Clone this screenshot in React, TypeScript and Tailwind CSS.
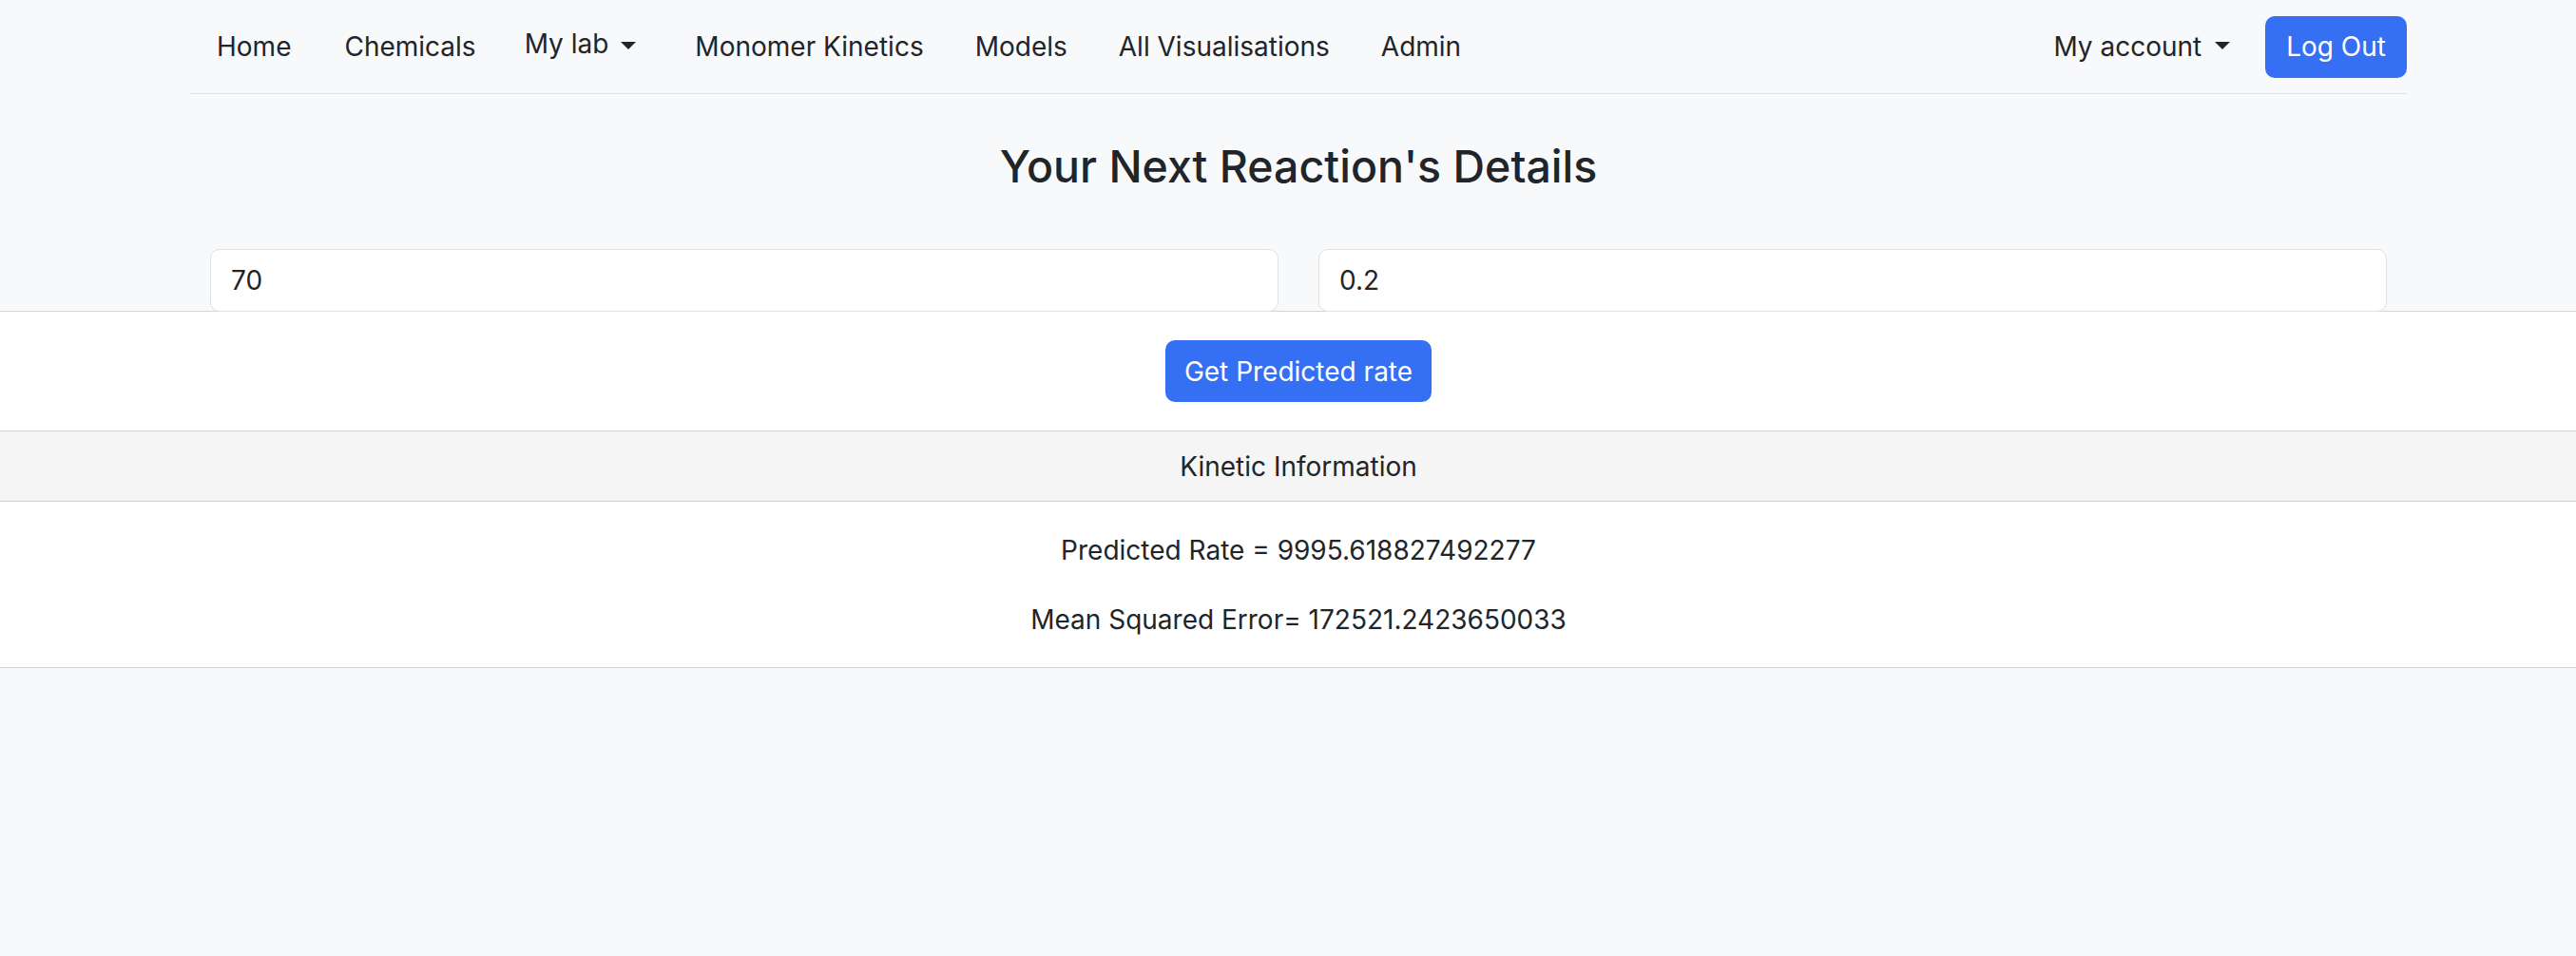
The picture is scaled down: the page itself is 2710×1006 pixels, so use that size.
import React from "react";

function Caret() {
  return (
    <span className="inline-block w-0 h-0 border-x-[8px] border-x-transparent border-t-[8px] border-t-[#212529]" />
  );
}

export default function App() {
  const links = ["Home", "Chemicals"];
  const links2 = ["Monomer Kinetics", "Models", "All Visualisations", "Admin"];
  return (
    <div className="min-h-screen bg-[#f8f9fa] text-[#212529] font-['Inter','Noto_Sans',sans-serif] text-[28px] leading-[1.5]">
      <nav className="ml-[200px] w-[2332px] h-[99px] border-b border-[#dee2e6] flex items-center">
        <ul className="flex items-center">
          {links.map((l) => (
            <li key={l} className="px-[28px]">
              {l}
            </li>
          ))}
          <li className="pl-[23px] pr-[35px] flex items-center gap-[13px]">
            <span className="-mt-[6px]">My lab</span>
            <span className="-mt-[2px] flex"><Caret /></span>
          </li>
          {links2.map((l) => (
            <li key={l} className="px-[27px]">
              {l}
            </li>
          ))}
        </ul>
        <div className="ml-auto flex items-center">
          <div className="flex items-center gap-[14px] mr-[37px]">
            <span>My account</span>
            <span className="-mt-[2px] flex"><Caret /></span>
          </div>
          <button className="h-[65px] px-[22px] rounded-[10px] bg-[#356ff4] text-white">
            Log Out
          </button>
        </div>
      </nav>

      <h3 className="mt-[47px] ml-[200px] w-[2332px] text-center text-[46.5px] font-medium leading-[59px]">
        Your Next Reaction's Details
      </h3>

      <div className="mt-[57px] ml-[200px] w-[2332px] flex">
        <div className="w-1/2 px-[21px]">
          <input
            defaultValue="70"
            className="w-full h-[66px] px-[21px] bg-white border border-[#dee2e6] rounded-[10px] text-[28px] text-[#212529] outline-none"
          />
        </div>
        <div className="w-1/2 px-[21px]">
          <input
            defaultValue="0.2"
            className="w-full h-[66px] px-[21px] bg-white border border-[#dee2e6] rounded-[10px] text-[28px] text-[#212529] outline-none"
          />
        </div>
      </div>

      <div className="-mt-[1px] bg-white border-t border-[#d4d4d4] py-[30px]">
        <div className="ml-[200px] w-[2332px] flex justify-center">
          <button className="h-[65px] px-[20px] rounded-[10px] bg-[#356ff4] text-white">
            Get Predicted rate
          </button>
        </div>
      </div>

      <div className="bg-white border-y border-[#d4d4d4]">
        <div className="h-[74px] bg-[#f5f5f5] border-b border-[#d4d4d4] flex items-center">
          <div className="ml-[200px] w-[2332px] text-center">Kinetic Information</div>
        </div>
        <div className="ml-[200px] w-[2332px] text-center pt-[30px] pb-[29px] flex flex-col gap-[31px]">
          <p>Predicted Rate = 9995.618827492277</p>
          <p>Mean Squared Error= 172521.2423650033</p>
        </div>
      </div>
    </div>
  );
}
